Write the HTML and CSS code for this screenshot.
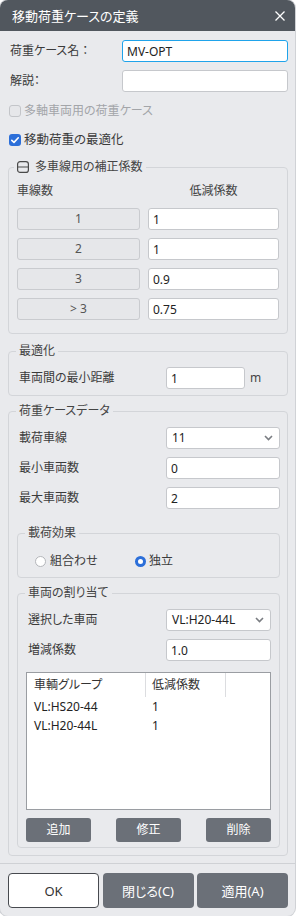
FILE: index.html
```html
<!DOCTYPE html>
<html lang="ja">
<head>
<meta charset="utf-8">
<title>移動荷重ケースの定義</title>
<link rel="stylesheet" href="styles.css">
</head>
<body>
<div class="dialog">
  <div class="titlebar">
    <span class="title">移動荷重ケースの定義</span>
    <svg class="close" width="10" height="10" viewBox="0 0 10 10"><path d="M0.5 0.5L9.5 9.5M9.5 0.5L0.5 9.5" stroke="#fff" stroke-width="1.3" fill="none"/></svg>
  </div>
  <div class="body">
    <div class="row r1">
      <span class="lbl">荷重ケース名 ：</span>
      <input class="field focus w-name" type="text" value="MV-OPT">
    </div>
    <div class="row r2">
      <span class="lbl">解説：</span>
      <input class="field w-name" type="text" value="">
    </div>
    <div class="check disabled"><span class="box"></span><span>多軸車両用の荷重ケース</span></div>
    <div class="check checked"><span class="box on"><svg width="12" height="12" viewBox="0 0 12 12"><path d="M2.8 6.3L5 8.4L9.3 3.8" stroke="#fff" stroke-width="1.6" fill="none" stroke-linecap="round" stroke-linejoin="round"/></svg></span><span>移動荷重の最適化</span></div>

    <fieldset class="grp g1">
      <legend><span class="lg"><svg class="collapse" width="12" height="12" viewBox="0 0 12 12"><rect x="0.6" y="0.6" width="10.8" height="10.8" rx="2.5" stroke="#4a4a4a" stroke-width="1.2" fill="none"/><path d="M0.6 6H11.4" stroke="#4a4a4a" stroke-width="1.2"/></svg><span>多車線用の補正係数</span></span></legend>
      <div class="lane-grid">
        <div class="hdr">車線数</div><div class="hdr center">低減係数</div>
        <div class="cell-btn">1</div><input class="field" type="text" value="1">
        <div class="cell-btn">2</div><input class="field" type="text" value="1">
        <div class="cell-btn">3</div><input class="field" type="text" value="0.9">
        <div class="cell-btn">&gt; 3</div><input class="field" type="text" value="0.75">
      </div>
    </fieldset>

    <fieldset class="grp g2">
      <legend>最適化</legend>
      <div class="row grow">
        <span class="lbl">車両間の最小距離</span>
        <input class="field w-dist" type="text" value="1">
        <span class="unit">m</span>
      </div>
    </fieldset>

    <fieldset class="grp g3">
      <legend>荷重ケースデータ</legend>
      <div class="rows">
        <div class="row">
          <span class="lbl pl2">載荷車線</span>
          <div class="field select w-g3"><span>11</span><svg width="9" height="6" viewBox="0 0 9 6"><path d="M1 1L4.5 4.5L8 1" stroke="#7a7d82" stroke-width="1.6" fill="none"/></svg></div>
        </div>
        <div class="row">
          <span class="lbl pl2">最小車両数</span>
          <input class="field w-g3" type="text" value="0">
        </div>
        <div class="row">
          <span class="lbl pl2">最大車両数</span>
          <input class="field w-g3" type="text" value="2">
        </div>
      </div>

      <fieldset class="grp g3a">
        <legend>載荷効果</legend>
        <div class="radios">
          <div class="radio"><span class="dot"></span><span>組合わせ</span></div>
          <div class="radio sel"><span class="dot"></span><span>独立</span></div>
        </div>
      </fieldset>

      <fieldset class="grp g3b">
        <legend>車両の割り当て</legend>
        <div class="rows">
          <div class="row">
            <span class="lbl pl2">選択した車両</span>
            <div class="field select w-g3b"><span>VL:H20-44L</span><svg width="9" height="6" viewBox="0 0 9 6"><path d="M1 1L4.5 4.5L8 1" stroke="#7a7d82" stroke-width="1.6" fill="none"/></svg></div>
          </div>
          <div class="row">
            <span class="lbl pl2">増減係数</span>
            <input class="field w-g3b" type="text" value="1.0">
          </div>
        </div>
        <div class="listbox">
          <div class="lb-head">
            <div class="lh c1">車輌グループ</div>
            <div class="lh c2">低減係数</div>
            <div class="lh c3"></div>
          </div>
          <div class="lb-row"><div class="c1">VL:HS20-44</div><div class="c2">1</div></div>
          <div class="lb-row"><div class="c1">VL:H20-44L</div><div class="c2">1</div></div>
        </div>
        <div class="actions">
          <div class="btn dark">追加</div>
          <div class="btn dark">修正</div>
          <div class="btn dark">削除</div>
        </div>
      </fieldset>
    </fieldset>
  </div>
  <div class="footer">
    <div class="fbtn ok">OK</div>
    <div class="fbtn dark">閉じる(C)</div>
    <div class="fbtn dark">適用(A)</div>
  </div>
</div>
</body>
</html>
```
FILE: styles.css
```css
* { box-sizing: border-box; }
html, body { margin: 0; padding: 0; background: #ffffff; }
body {
  font-family: "Noto Sans", "Noto Sans CJK JP", sans-serif;
  font-size: 12px;
  color: #3b3b3b;
  font-feature-settings: "palt" 1;
}

.dialog {
  width: 295px;
  background: #e9eaed;
  border-radius: 8px;
  overflow: hidden;
  box-shadow: 0 0 0 1px #d0d2d6;
}

.titlebar {
  height: 31px;
  background: #51575e;
  color: #ffffff;
  display: flex;
  align-items: center;
  justify-content: space-between;
  padding: 0 10px 0 12px;
  font-size: 13px;
  line-height: 16px;
}
.close { display: block; }

.body { padding: 0 7px 7px 8px; }

.row {
  display: flex;
  align-items: center;
  height: 22px;
}
.lbl { flex: 1; line-height: 16px; white-space: nowrap; }
.r1 { margin-top: 9px; }
.r2 { margin-top: 8px; }
.r1 .lbl, .r2 .lbl { padding-left: 2px; }
.pl2 { padding-left: 2px; }

.field {
  height: 22px;
  margin: 0;
  background: #ffffff;
  border: 1px solid #c6c8cc;
  border-radius: 3px;
  padding: 0 4px;
  font-family: inherit;
  font-size: 12px;
  color: #222222;
  outline: none;
  min-width: 0;
}
.field.focus { border-color: #1fa3ea; }
.w-name { width: 166px; }
.w-dist { width: 79px; }
.w-g3 { width: 114px; }
.w-g3b { width: 105px; }

.select {
  display: flex;
  align-items: center;
  justify-content: space-between;
  padding: 0 6px 0 5px;
  line-height: 16px;
}
.select svg { display: block; }

.check {
  display: flex;
  align-items: center;
  height: 20px;
  margin-top: 9px;
  gap: 3px;
  line-height: 16px;
}
.check .box {
  width: 12px;
  height: 12px;
  margin-left: 1px;
  border-radius: 3px;
  border: 1px solid #c3c5c9;
  background: #e6e7ea;
  display: block;
}
.check .box.on {
  border: none;
  background: #2c6fd9;
}
.check .box svg { display: block; }
.check.disabled { color: #a3a5a9; }
.check.checked { font-size: 12.5px; }

.grp {
  margin: 0;
  border: 1px solid #d3d5d9;
  border-radius: 4px;
  min-width: 0;
}
.grp > legend {
  padding: 0 3px;
  line-height: 18px;
  height: 18px;
  color: #444444;
}
.lg { display: flex; align-items: center; gap: 6px; }
.collapse { display: block; }

.g1 { margin-top: 8px; padding: 0 8px 13px 8px; }
.g1 > legend { margin-left: -3px; }
.lane-grid {
  margin-top: 6px;
  display: grid;
  grid-template-columns: 123px 131px;
  column-gap: 8px;
  row-gap: 8px;
}
.hdr { height: 18px; line-height: 18px; color: #444444; }
.hdr.center { text-align: center; }
.lane-grid .field { width: 131px; }
.cell-btn {
  height: 22px;
  background: #e6e7ea;
  border: 1px solid #c9cbcf;
  border-radius: 3px;
  display: flex;
  align-items: center;
  justify-content: center;
  color: #555555;
  line-height: 16px;
}

.g2 { margin-top: 8px; padding: 0 8px 6px 10px; }
.g2 > legend { margin-left: -3px; }
.grow { margin-top: 7px; }
.unit { width: 34px; padding-left: 5px; line-height: 16px; color: #444444; }

.g3 { margin-top: 6px; padding: 0 7px 7px 8px; }
.g3 > legend { margin-left: -1px; }
.rows {
  margin-top: 7px;
  display: flex;
  flex-direction: column;
  gap: 8px;
}

.g3a { margin-top: 15px; padding: 0 8px 7px 10px; }
.g3a > legend { margin-left: -3px; }
.radios {
  margin-top: 10px;
  height: 18px;
  display: flex;
  align-items: center;
  padding-left: 7px;
}
.radio { display: flex; align-items: center; gap: 4px; line-height: 16px; }
.radio:first-child { width: 100px; }
.radio .dot {
  width: 11px;
  height: 11px;
  border-radius: 50%;
  border: 1px solid #b4b6ba;
  background: #ffffff;
  display: block;
}
.radio.sel { gap: 3px; }
.radio.sel .dot {
  border: 3px solid #2c6fd9;
  background: #ffffff;
}

.g3b { margin-top: 6px; padding: 0 8px 5px 8px; }
.g3b > legend { margin-left: -1px; }

.listbox {
  margin-top: 11px;
  height: 138px;
  background: #ffffff;
  border: 1px solid #9a9da2;
}
.lb-head { display: flex; height: 24px; }
.lh { height: 24px; line-height: 24px; color: #333333; }
.c1 { width: 119px; padding-left: 7px; flex: none; }
.c2 { width: 80px; padding-left: 6px; flex: none; }
.lh.c1, .lh.c2 { border-right: 1px solid #dcdde0; }
.lb-row { display: flex; height: 19px; line-height: 19px; color: #222222; }

.actions {
  margin-top: 8px;
  display: flex;
  justify-content: space-between;
}
.btn {
  width: 65px;
  height: 24px;
  border-radius: 3px;
  display: flex;
  align-items: center;
  justify-content: center;
  line-height: 16px;
}
.dark { background: #6b7078; color: #ffffff; }

.footer {
  border-top: 1px solid #cfd1d5;
  padding: 9px 6px 8px 8px;
  display: flex;
  gap: 3.5px;
}
.fbtn {
  width: 91px;
  height: 35px;
  border-radius: 4px;
  display: flex;
  align-items: center;
  justify-content: center;
  font-size: 13px;
  line-height: 16px;
}
.fbtn.ok { background: #ffffff; border: 1px solid #474a4f; color: #333333; }
```
